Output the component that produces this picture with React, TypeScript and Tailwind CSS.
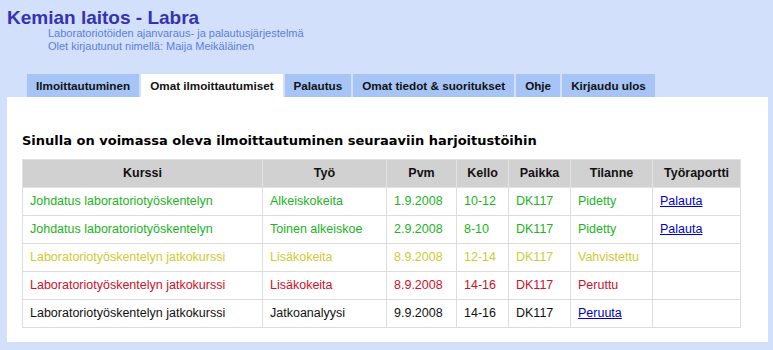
import React from "react";

const rows = [
  { k: "Johdatus laboratoriotyöskentelyn", t: "Alkeiskokeita", p: "1.9.2008", c: "10-12", pa: "DK117", ti: "Pidetty", r: "Palauta", col: "text-[#22b422]" },
  { k: "Johdatus laboratoriotyöskentelyn", t: "Toinen alkeiskoe", p: "2.9.2008", c: "8-10", pa: "DK117", ti: "Pidetty", r: "Palauta", col: "text-[#22b422]" },
  { k: "Laboratoriotyöskentelyn jatkokurssi", t: "Lisäkokeita", p: "8.9.2008", c: "12-14", pa: "DK117", ti: "Vahvistettu", r: "", col: "text-[#cccc33]" },
  { k: "Laboratoriotyöskentelyn jatkokurssi", t: "Lisäkokeita", p: "8.9.2008", c: "14-16", pa: "DK117", ti: "Peruttu", r: "", col: "text-[#d0102a]" },
  { k: "Laboratoriotyöskentelyn jatkokurssi", t: "Jatkoanalyysi", p: "9.9.2008", c: "14-16", pa: "DK117", ti: "Peruuta", r: "", col: "text-[#111111]", link: true },
];

const tabs = ["Ilmoittautuminen", "Omat ilmoittautumiset", "Palautus", "Omat tiedot & suoritukset", "Ohje", "Kirjaudu ulos"];

export default function App() {
  const td = "border border-[#dddddd] px-[7px] h-[28px] text-left";
  return (
    <div className="w-[773px] h-[350px] bg-[#d3e0fb] overflow-hidden" style={{ fontFamily: '"Liberation Sans", Arial, sans-serif' }}>
      <div className="pl-[7px] pt-[8px] h-[74px]">
        <div className="text-[19px] leading-[19px] font-bold text-[#3333b3]">Kemian laitos - Labra</div>
        <div className="pl-[41px] text-[11px] leading-[13px] text-[#5a7fdc]">
          <div>Laboratoriotöiden ajanvaraus- ja palautusjärjestelmä</div>
          <div>Olet kirjautunut nimellä: Maija Meikäläinen</div>
        </div>
      </div>
      <div className="flex pl-[27px] h-[23px] gap-[2px]">
        {tabs.map((t, i) => (
          <div
            key={t}
            className={`px-[9px] flex items-center text-[11.7px] font-bold text-[#111] ${i === 1 ? "bg-white" : "bg-[#a6c4f6]"}`}
          >
            {t}
          </div>
        ))}
      </div>
      <div className="ml-[7px] w-[761px] h-[245px] bg-white pt-[36px] pl-[15px]">
        <div className="text-[13px] leading-[16px] font-bold text-black mb-[10px]" style={{ fontFamily: '"DejaVu Sans", Verdana, sans-serif' }}>
          Sinulla on voimassa oleva ilmoittautuminen seuraaviin harjoitustöihin
        </div>
        <table className="border-collapse border border-[#b8b8b8] text-[12.5px]">
          <thead>
            <tr className="bg-[#d1d1d1] text-[#111]">
              {[
                ["Kurssi", "w-[240px]"],
                ["Työ", "w-[124px]"],
                ["Pvm", "w-[70px]"],
                ["Kello", "w-[52px]"],
                ["Paikka", "w-[62px]"],
                ["Tilanne", "w-[82px]"],
                ["Työraportti", "w-[88px]"],
              ].map(([h, w]) => (
                <th key={h} className={`border border-[#e2e2e2] h-[28px] font-bold text-center ${w}`}>{h}</th>
              ))}
            </tr>
          </thead>
          <tbody>
            {rows.map((r, i) => (
              <tr key={i} className={r.col}>
                <td className={td}>{r.k}</td>
                <td className={td}>{r.t}</td>
                <td className={td}>{r.p}</td>
                <td className={td}>{r.c}</td>
                <td className={td}>{r.pa}</td>
                <td className={td}>
                  {r.link ? <a className="text-[#0000cc] underline" href="#">{r.ti}</a> : r.ti}
                </td>
                <td className={td}>
                  {r.r ? <a className="text-[#0000cc] underline" href="#">{r.r}</a> : null}
                </td>
              </tr>
            ))}
          </tbody>
        </table>
      </div>
    </div>
  );
}
